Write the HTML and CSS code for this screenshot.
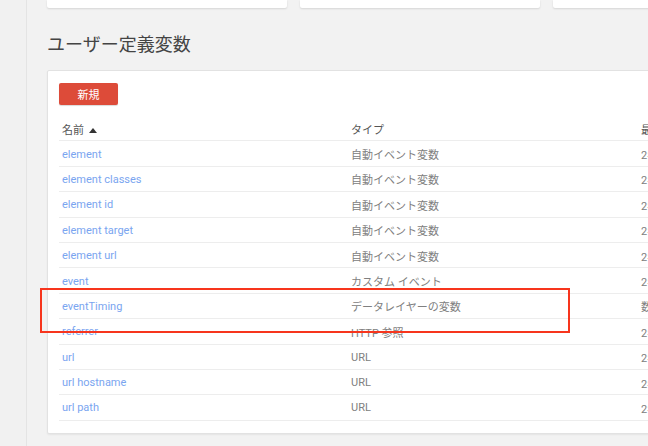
FILE: index.html
```html
<!DOCTYPE html>
<html lang="ja">
<head>
<meta charset="utf-8">
<link rel="stylesheet" href="styles.css">
</head>
<body>
<div class="app">
  <aside class="sidebar"></aside>
  <main class="main">
    <div class="top-cards">
      <div class="mini-card"></div>
      <div class="mini-card"></div>
      <div class="mini-card"></div>
    </div>
    <h1 class="title">ユーザー定義変数</h1>
    <section class="card">
      <button class="btn-new">新規</button>
      <div class="table">
        <div class="row head">
          <div class="cell">名前 <svg class="sort" width="8" height="5" viewBox="0 0 8 5"><path d="M0 5 L4 0 L8 5 Z" fill="#333"/></svg></div>
          <div class="cell">タイプ</div>
          <div class="cell">最終編集日</div>
        </div>
        <div class="row"><div class="cell link">element</div><div class="cell">自動イベント変数</div><div class="cell">2年前</div></div>
        <div class="row"><div class="cell link">element classes</div><div class="cell">自動イベント変数</div><div class="cell">2年前</div></div>
        <div class="row"><div class="cell link">element id</div><div class="cell">自動イベント変数</div><div class="cell">2年前</div></div>
        <div class="row"><div class="cell link">element target</div><div class="cell">自動イベント変数</div><div class="cell">2年前</div></div>
        <div class="row"><div class="cell link">element url</div><div class="cell">自動イベント変数</div><div class="cell">2年前</div></div>
        <div class="row"><div class="cell link">event</div><div class="cell">カスタム イベント</div><div class="cell">2年前</div></div>
        <div class="row"><div class="cell link">eventTiming</div><div class="cell">データレイヤーの変数</div><div class="cell">数日前</div></div>
        <div class="row"><div class="cell link">referrer</div><div class="cell">HTTP 参照</div><div class="cell">2年前</div></div>
        <div class="row"><div class="cell link">url</div><div class="cell">URL</div><div class="cell">2年前</div></div>
        <div class="row"><div class="cell link">url hostname</div><div class="cell">URL</div><div class="cell">2年前</div></div>
        <div class="row"><div class="cell link">url path</div><div class="cell">URL</div><div class="cell">2年前</div></div>
      </div>
    </section>
  </main>
</div>
<div class="highlight"></div>
</body>
</html>
```
FILE: styles.css
```css
html, body {
  margin: 0;
  padding: 0;
  width: 648px;
  height: 446px;
  overflow: hidden;
  background: #f2f2f2;
  font-family: Roboto, "Noto Sans CJK JP", sans-serif;
}

.app {
  display: flex;
  height: 446px;
}

.sidebar {
  width: 26px;
  flex: none;
  background: #f1f1f1;
  border-right: 1px solid #e4e4e4;
}

.main {
  flex: none;
  width: 900px;
  padding-left: 20px;
}

.top-cards {
  display: flex;
  gap: 13px;
}

.mini-card {
  width: 240px;
  height: 8px;
  flex: none;
  background: #fff;
  box-shadow: 0 1px 2px rgba(0, 0, 0, 0.12);
  border-radius: 0 0 2px 2px;
}

.title {
  margin: 23px 0 15px;
  font-size: 18px;
  line-height: 24px;
  font-weight: 400;
  color: #444;
  font-family: "Noto Sans CJK JP", sans-serif;
}

.card {
  width: 860px;
  height: 364px;
  box-sizing: border-box;
  background: #fff;
  border: 1px solid #e2e2e2;
  border-radius: 2px;
  box-shadow: 0 1px 2px rgba(0, 0, 0, 0.06);
  padding: 12px 0 0 11px;
}

.btn-new {
  display: block;
  width: 59px;
  height: 22px;
  border: none;
  border-radius: 2px;
  background: #dd4b39;
  color: #fff;
  font-family: "Noto Sans CJK JP", sans-serif;
  font-size: 11px;
  padding: 0;
  box-shadow: 0 1px 1px rgba(0, 0, 0, 0.15);
}

.table {
  margin-top: 11px;
}

.row {
  display: grid;
  grid-template-columns: 289px 290px 1fr;
  height: 25.4px;
  box-sizing: border-box;
  border-bottom: 1px solid #ededed;
  align-items: center;
  font-size: 11px;
  color: #808080;
}

.row.head {
  color: #555;
}

.cell {
  padding-left: 3px;
  padding-top: 1px;
  white-space: nowrap;
}

.cell.link {
  color: #7aa5f0;
}

.sort {
  margin-left: 2px;
  vertical-align: 1px;
}

.highlight {
  position: absolute;
  left: 40px;
  top: 288px;
  width: 530px;
  height: 45px;
  box-sizing: border-box;
  border: 2px solid #f7351d;
}
```
